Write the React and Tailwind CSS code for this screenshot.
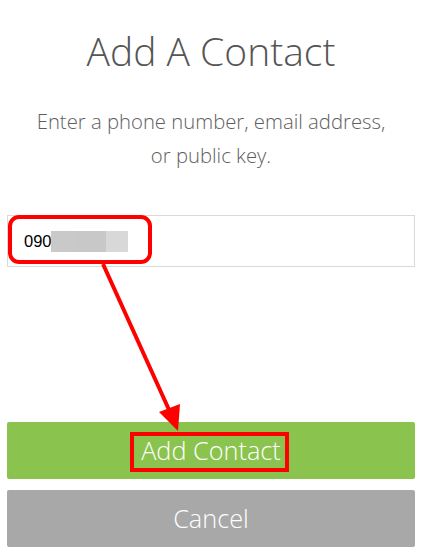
import { useState } from 'react';

function Annotations() {
  return (
    <svg className="pointer-events-none absolute inset-0" width="426" height="560" viewBox="0 0 426 560">
      <rect x="10" y="217" width="140" height="45" rx="9" fill="none" stroke="#ff0000" strokeWidth="4" />
      <line x1="103" y1="264" x2="170" y2="412" stroke="#ff0000" strokeWidth="4" />
      <polygon points="159,412 180,404 178,431" fill="#ff0000" />
      <rect x="132" y="434" width="155" height="36" fill="none" stroke="#ff0000" strokeWidth="4" />
    </svg>
  );
}

export default function App() {
  const [value, setValue] = useState('090');

  return (
    <div className="relative h-[560px] w-[426px] overflow-hidden bg-white font-['Open_Sans',sans-serif]">
      <h1 className="pr-[4px] pt-[29px] text-center text-[39px] font-light leading-[44px] text-[#555]">Add A Contact</h1>
      <p className="mt-[31px] pr-[4px] text-center text-[20.3px] font-light leading-[34px] text-[#5e5e5e]">
        Enter a phone number, email address,
        <br />
        or public key.
      </p>

      <div className="ml-[7px] mr-[11px] mt-[43px] flex h-[52px] items-center border border-[#d9d9d9] pl-4">
        <input
          className="w-[27px] bg-transparent font-['Liberation_Sans',Arial,sans-serif] text-[16.5px] text-black outline-none"
          value={value}
          onChange={(e) => setValue(e.target.value)}
        />
        <div className="flex h-[21px]">
          <div className="w-[27px] bg-[#c9c9c9]" />
          <div className="w-[28px] bg-[#c8c8c8]" />
          <div className="w-[22px] bg-[#d8d8d8]" />
        </div>
      </div>

      <div className="ml-[7px] mr-[11px] mt-[155px] flex flex-col gap-[11px]">
        <button className="h-[57px] rounded-[2px] bg-[#8bc34f] text-[25.3px] font-light text-white">Add Contact</button>
        <button className="h-[57px] rounded-[2px] bg-[#a8a8a8] text-[25.3px] font-light text-white">Cancel</button>
      </div>

      <Annotations />
    </div>
  );
}
